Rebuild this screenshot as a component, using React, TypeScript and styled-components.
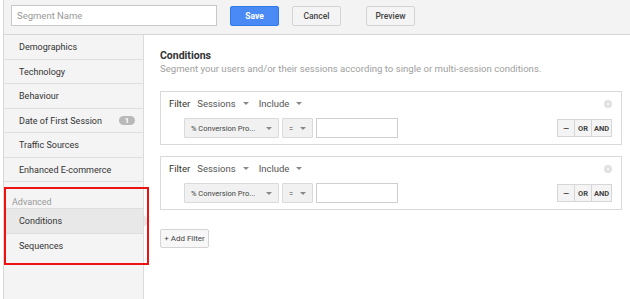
import React from 'react';
import styled, { createGlobalStyle } from 'styled-components';

const Global = createGlobalStyle`
    html, body {
        margin: 0;
        padding: 0;
        background: #ffffff;
        font-family: Roboto, 'Liberation Sans', Arial, sans-serif;
        color: #333;
    }
`;

const Page = styled.div`
    height: 299px;
    width: 627px;
    box-sizing: border-box;
    border-left: 1px solid #d8d8d8;
    margin-left: 3px;
    display: flex;
    flex-direction: column;
    overflow: hidden;
`;

const TopBar = styled.div`
    height: 35px;
    flex-shrink: 0;
    box-sizing: border-box;
    background: #f3f3f3;
    border-bottom: 1px solid #d6d6d6;
    display: flex;
    align-items: center;
    padding: 0 0 3px 7px;
`;

const NameInput = styled.input`
    width: 206px;
    height: 21px;
    box-sizing: border-box;
    border: 1px solid #c8c8c8;
    background: #fff;
    font-family: inherit;
    font-size: 9.5px;
    padding: 0 5px;
    color: #333;
    outline: none;
    &::placeholder {
        color: #999;
    }
`;

const Btn = styled.button<{ $primary?: boolean; $gap: number }>`
    margin-left: ${(p) => p.$gap}px;
    width: 49px;
    height: 20px;
    box-sizing: border-box;
    border-radius: 2px;
    border: 1px solid ${(p) => (p.$primary ? '#3079ed' : '#d4d4d4')};
    background: ${(p) => (p.$primary ? '#4a8af4' : '#f4f4f4')};
    color: ${(p) => (p.$primary ? '#fff' : '#444')};
    font-family: inherit;
    font-size: 8.5px;
    font-weight: ${(p) => (p.$primary ? 700 : 500)};
    padding: 0;
    cursor: pointer;
`;

const Body = styled.div`
    flex: 1;
    display: flex;
`;

const Side = styled.div`
    width: 139px;
    flex-shrink: 0;
    background: #f4f4f4;
    border-right: 1px solid #dcdcdc;
    display: flex;
    flex-direction: column;
`;

const Item = styled.div<{ $active?: boolean; $last?: boolean }>`
    position: relative;
    height: 24.5px;
    flex-shrink: 0;
    box-sizing: border-box;
    border-bottom: ${(p) => (p.$last ? 'none' : '1px solid #dedede')};
    background: ${(p) => (p.$active ? '#e8e8e8' : 'transparent')};
    display: flex;
    align-items: center;
    justify-content: space-between;
    padding: 1px 8px 0 15px;
    font-size: 9px;
    color: #333;
    white-space: nowrap;

    ${(p) =>
        p.$active &&
        `
        &::after {
            content: '';
            position: absolute;
            right: -7px;
            top: 6px;
            border-left: 6px solid #e8e8e8;
            border-top: 6px solid transparent;
            border-bottom: 6px solid transparent;
        }
    `}
`;

const Badge = styled.span`
    background: #b9b9b9;
    color: #fff;
    font-size: 7.5px;
    font-weight: 700;
    border-radius: 5px;
    padding: 0 6px;
    line-height: 9px;
`;

const Advanced = styled.div`
    position: relative;
    margin-top: 14px;

    &::after {
        content: '';
        position: absolute;
        left: 0;
        top: -9px;
        width: 145px;
        height: 78px;
        box-sizing: border-box;
        border: 2px solid #ee1111;
        pointer-events: none;
        z-index: 2;
    }
`;

const GroupLabel = styled.div`
    font-size: 9px;
    color: #9a9a9a;
    padding: 0 0 0 8px;
    line-height: 12px;
    border-bottom: 1px solid #dedede;
`;

const Main = styled.div`
    flex: 1;
    padding: 14px 8px 0 16px;
    display: flex;
    flex-direction: column;
`;

const Title = styled.div`
    font-size: 10.5px;
    font-weight: 700;
    color: #333;
    line-height: 13px;
`;

const Sub = styled.div`
    font-size: 9.6px;
    color: #a0a0a0;
    line-height: 13px;
    margin-bottom: 16px;
    white-space: nowrap;
`;

const Card = styled.div`
    position: relative;
    height: 54px;
    flex-shrink: 0;
    box-sizing: border-box;
    border: 1px solid #d9d9d9;
    margin-bottom: 11px;
    padding: 4px 8px 0 8px;
    display: flex;
    flex-direction: column;
`;

const HeadRow = styled.div`
    display: flex;
    align-items: center;
    height: 15px;
    font-size: 9.5px;
`;

const Label = styled.span`
    color: #333;
    margin-right: 7px;
`;

const Drop = styled.span<{ $gap: number }>`
    color: #555;
    margin-right: ${(p) => p.$gap}px;
    display: inline-flex;
    align-items: center;
`;

const Caret = styled.span`
    display: inline-block;
    margin-left: 7px;
    border-left: 3px solid transparent;
    border-right: 3px solid transparent;
    border-top: 3px solid #888;
`;

const Close = styled.span`
    position: absolute;
    right: 9px;
    top: 8px;
    width: 8px;
    height: 8px;
    border-radius: 50%;
    background: #e0e0e0;
    display: flex;
    align-items: center;
    justify-content: center;
    color: #fff;
    font-size: 6px;
    line-height: 1;
`;

const CondRow = styled.div`
    display: flex;
    align-items: center;
    margin-top: 7px;
    padding-left: 15px;
`;

const Select = styled.div<{ $w: number }>`
    width: ${(p) => p.$w}px;
    height: 20px;
    flex-shrink: 0;
    box-sizing: border-box;
    background: #f1f1f1;
    border: 1px solid #dadada;
    border-radius: 1px;
    margin-right: 3px;
    display: flex;
    align-items: center;
    justify-content: space-between;
    padding: 0 6px 0 6px;
    font-size: 7.5px;
    color: #444;
    white-space: nowrap;
`;

const Value = styled.input`
    width: 82px;
    height: 20px;
    box-sizing: border-box;
    border: 1px solid #cfcfcf;
    outline: none;
`;

const Logic = styled.div`
    margin-left: auto;
    margin-right: 1px;
    display: flex;
`;

const LogicBtn = styled.span<{ $w: number }>`
    width: ${(p) => p.$w}px;
    height: 18px;
    box-sizing: border-box;
    border: 1px solid #d6d6d6;
    margin-left: -1px;
    background: #f4f4f4;
    font-size: 7.5px;
    font-weight: 700;
    color: #444;
    display: flex;
    align-items: center;
    justify-content: center;
`;

const AddBtn = styled.button`
    align-self: flex-start;
    margin-top: 8px;
    width: 49px;
    height: 19px;
    box-sizing: border-box;
    border: 1px solid #d4d4d4;
    border-radius: 2px;
    background: #f7f7f7;
    font-family: inherit;
    font-size: 8px;
    color: #444;
    padding: 0;
    white-space: nowrap;
`;

const sections = ['Demographics', 'Technology', 'Behaviour', 'Date of First Session', 'Traffic Sources', 'Enhanced E-commerce'];

function FilterCard() {
    return (
        <Card>
            <HeadRow>
                <Label>Filter</Label>
                <Drop $gap={10}>
                    Sessions
                    <Caret />
                </Drop>
                <Drop $gap={0}>
                    Include
                    <Caret />
                </Drop>
            </HeadRow>
            <Close>×</Close>
            <CondRow>
                <Select $w={95}>
                    % Conversion Pro...
                    <Caret />
                </Select>
                <Select $w={31}>
                    =
                    <Caret />
                </Select>
                <Value />
                <Logic>
                    <LogicBtn $w={18}>—</LogicBtn>
                    <LogicBtn $w={18}>OR</LogicBtn>
                    <LogicBtn $w={21}>AND</LogicBtn>
                </Logic>
            </CondRow>
        </Card>
    );
}

function App() {
    return (
        <Page>
            <Global />
            <TopBar>
                <NameInput placeholder="Segment Name" />
                <Btn $primary $gap={13}>Save</Btn>
                <Btn $gap={13}>Cancel</Btn>
                <Btn $gap={25}>Preview</Btn>
            </TopBar>
            <Body>
                <Side>
                    {sections.map((s) => (
                        <Item key={s}>
                            {s}
                            {s === 'Date of First Session' && <Badge>1</Badge>}
                        </Item>
                    ))}
                    <Advanced>
                        <GroupLabel>Advanced</GroupLabel>
                        <Item $active>Conditions</Item>
                        <Item $last>Sequences</Item>
                    </Advanced>
                </Side>
                <Main>
                    <Title>Conditions</Title>
                    <Sub>Segment your users and/or their sessions according to single or multi-session conditions.</Sub>
                    <FilterCard />
                    <FilterCard />
                    <AddBtn>+ Add Filter</AddBtn>
                </Main>
            </Body>
        </Page>
    );
}

export default App;
